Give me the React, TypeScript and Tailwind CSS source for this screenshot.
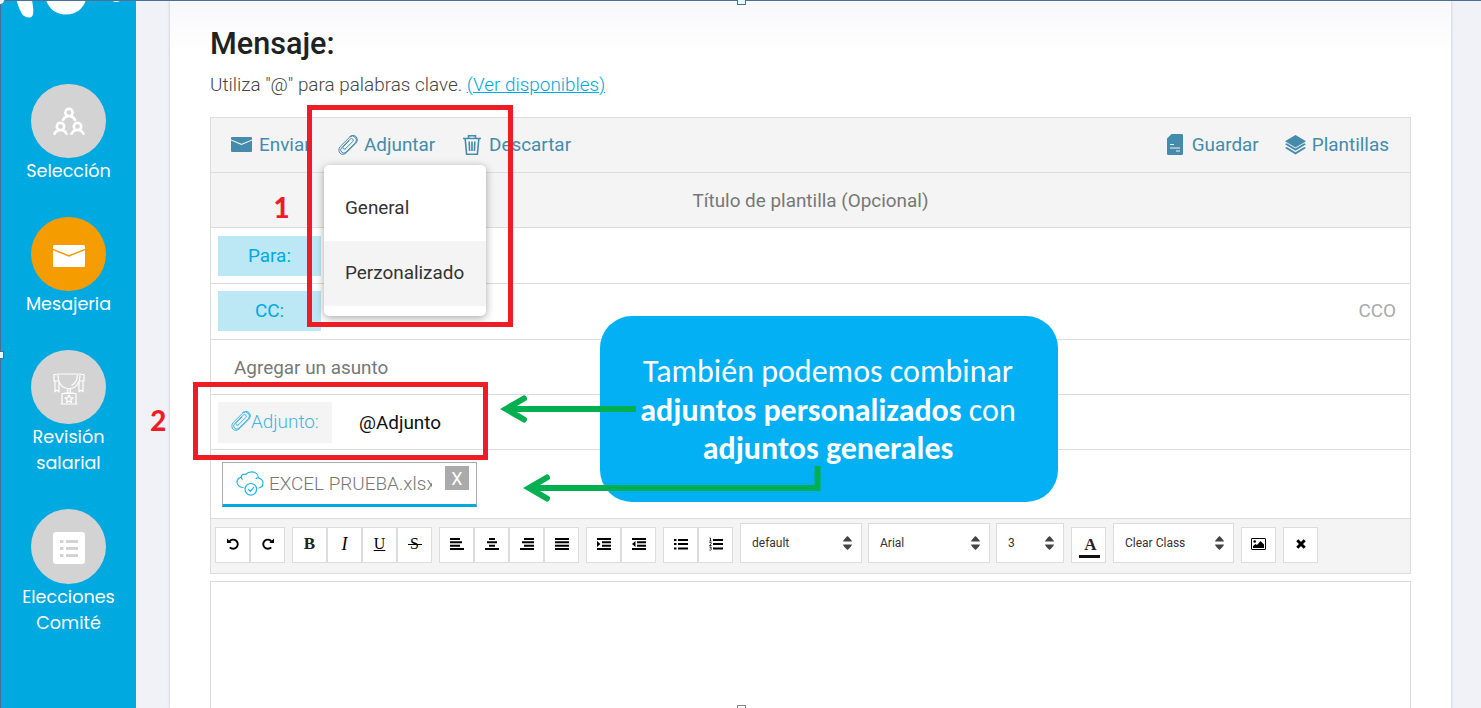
import React from 'react';

type IconProps = { className?: string };

const MailIcon = ({ className }: IconProps) => (
  <svg className={className} viewBox="0 0 32 22" fill="currentColor" preserveAspectRatio="none">
    <path d="M1.5 0h29A1.5 1.5 0 0 1 32 1.5v2.3L16 10 0 3.800V1.500A1.500 1.500 0 0 1 1.500 0Z" />
    <path d="M0 5.300 16 11.700 32 5.300V20.500a1.500 1.500 0 0 1-1.500 1.500h-29A1.500 1.500 0 0 1 0 20.500Z" />
  </svg>
);

const ClipIcon = ({ className }: IconProps) => (
  <svg className={className} viewBox="0 0 20 20" fill="none" stroke="currentColor" strokeWidth="1" strokeLinecap="round">
    <path d="M7.200 14 14.700 6.600A1.700 1.700 0 0 0 12.200 4.100L3.600 12.700A3.100 3.100 0 0 0 8 17.100L17.300 7.800A4 4 0 0 0 11.700 2.100L2.200 11.500A5 5 0 0 0 .9 15.400 3.800 3.800 0 0 0 5 19.300C6.600 19.200 7.700 18.500 8.900 17.300L18 8.200A4.900 4.900 0 0 0 18.400 1.900 4.900 4.900 0 0 0 11.700 1.500M7.200 14A1.500 1.500 0 0 1 5.200 11.800L11 6" />
  </svg>
);

const TrashIcon = ({ className }: IconProps) => (
  <svg className={className} viewBox="0 0 18 20" fill="none" stroke="currentColor" strokeWidth="1.600">
    <path d="M0 3.500h18M5.500 3.300V.8h7v2.500M2.200 4l1.400 15.200h10.800L15.800 4M6.200 6.500l.4 9.500M9 6.500V16M11.800 6.500l-.4 9.500" />
  </svg>
);

const FileIcon = ({ className }: IconProps) => (
  <svg className={className} viewBox="0 0 16 21">
    <path fill="currentColor" d="M4.500 0H14.500A1.300 1.300 0 0 1 16 1.300V19.700A1.300 1.300 0 0 1 14.700 21H1.300A1.300 1.300 0 0 1 0 19.700V4.500Z" />
    <path stroke="#f4f4f4" strokeWidth="1" d="M3 10.500h4M3 14h10M9 17h4" />
  </svg>
);

const LayersIcon = ({ className }: IconProps) => (
  <svg className={className} viewBox="0 0 21 20" fill="currentColor">
    <path d="M10.500 0 21 6.200 10.500 12.500 0 6.200Z" />
    <path d="M0 9.200 1.800 8.200 10.500 13.400 19.200 8.200 21 9.200 10.500 15.700Z" />
    <path d="M0 13 1.800 12 10.500 17.200 19.200 12 21 13 10.500 19.500Z" />
  </svg>
);

const PeopleIcon = () => (
  <svg className="h-7 w-8" viewBox="0 0 32 28" fill="none" stroke="#fff" strokeWidth="2.700" strokeLinecap="round">
    <circle cx="16" cy="5.500" r="3.700" />
    <path d="M10 12.800c1-2 2.600-3 4-3.400M22 12.800c-1-2-2.600-3-4-3.400" />
    <circle cx="7.500" cy="19.500" r="3.700" />
    <path d="M1.500 26.700c1-2 2.600-3 4-3.400M13.500 26.700c-1-2-2.600-3-4-3.400" />
    <circle cx="24.500" cy="19.500" r="3.700" />
    <path d="M18.500 26.700c1-2 2.600-3 4-3.400M30.500 26.700c-1-2-2.600-3-4-3.400" />
  </svg>
);

const TrophyIcon = () => (
  <svg className="mt-1 h-8 w-8" viewBox="0 0 32 32" fill="none" stroke="#fff" strokeWidth="1.200" strokeLinejoin="round">
    <path d="M4 1h24M5 2c0 9 4.500 13.500 11 13.500S27 11 27 2M24.500 2c-.3 5-2 8.500-6 10.500" />
    <path d="M4 1.500H1v6.500h4.500M28 1.500h3v6.500h-4.500M2 8v10.800l2-1.700 2 1.700V9M30 8v10.800l-2-1.700-2 1.700V9" />
    <path d="M14.700 15.500v4.500M17.300 15.500v4.500M11 20h10M9 20.500h14v10.500H9zM7.500 31h17" />
    <path d="m16 22 1.200 2.600 2.800.3-2.100 1.900.6 2.700-2.500-1.400-2.500 1.400.6-2.700-2.100-1.900 2.800-.3Z" />
  </svg>
);

const BallotIcon = () => (
  <svg className="mt-[3px] h-8 w-8" viewBox="0 0 32 32">
    <rect width="32" height="32" rx="3" fill="#fff" />
    <path stroke="#d3d3d3" strokeWidth="3" d="M7 9.500h3.500M13 9.500h12M7 16.500h3.500M13 16.500h12M7 23.500h3.500M13 23.500h12" />
  </svg>
);

const CloudIcon = () => (
  <svg className="-ml-px h-[25px] w-7 shrink-0" viewBox="0 0 28 25" fill="none" stroke="#1fb0e4" strokeWidth="1.200" strokeLinecap="round">
    <path d="M7 16.500C3.500 16.500 1 14 1 11.200 1 8.500 3 6.600 5.300 6.100 5.300 4 7.500 2.400 9.800 3.300 11.500 1.300 13.500.8 15.500.8 19.500.8 22.300 3.500 22.500 7 25.500 7.700 27 10 27 12.300 27 14.700 25.300 16.500 23 17M5.300 6.100c0 .9.300 1.500.9 2M22.500 7c-.8-.1-1.500 0-2.300.4" />
    <circle cx="14.800" cy="18.300" r="5.800" />
    <path d="m12.300 18.300 2 2 3.400-4" />
  </svg>
);

const Lines = ({ d, extra }: { d: string; extra?: React.ReactNode }) => (
  <svg className="-mt-px h-3 w-[14px]" viewBox="0 0 14 12" fill="#000" stroke="none">
    <path d={d} stroke="#000" strokeWidth="2" fill="none" />
    {extra}
  </svg>
);

const UndoIcon = ({ flip }: { flip?: boolean }) => (
  <svg className={flip ? '-mt-px h-3 w-3 -scale-x-100' : '-mt-px h-3 w-3'} viewBox="0 0 12 12" fill="none">
    <path d="M2.600 3.300A4.600 4.600 0 1 1 2.800 9.300" stroke="#000" strokeWidth="1.900" />
    <path d="M0 .5V5h4.600Z" fill="#000" />
  </svg>
);

const Tool = ({ children }: { children: React.ReactNode }) => (
  <button className="flex h-9 w-[35px] items-center justify-center border border-[#dcdcdc] bg-white pb-[2px] text-black">{children}</button>
);

const Group = ({ children }: { children: React.ReactNode }) => <div className="mr-[7px] flex">{children}</div>;

const Select = ({ label, className }: { label: string; className: string }) => (
  <div className={`flex h-10 items-center justify-between border border-[#dcdcdc] bg-white pr-[9px] pl-[11px] text-[12px] text-[#333] ${className}`}>
    <span>{label}</span>
    <svg className="h-[14px] w-[9px]" viewBox="0 0 9 14" fill="#444">
      <path d="M0 5.500Q.3 4 4.500 0 8.700 4 9 5.500ZM0 8.500Q.3 10 4.500 14 8.700 10 9 8.500Z" />
    </svg>
  </div>
);

const NavItem = ({ icon, lines, active, tall }: { icon: React.ReactNode; lines: string[]; active?: boolean; tall?: boolean }) => (
  <div className="mb-[33px] flex flex-col items-center">
    <div className={`flex w-[75px] items-center justify-center rounded-full ${tall ? 'h-[75px]' : 'h-[74px]'} ${active ? 'bg-[#f59c00]' : 'bg-[#d3d3d3]'}`}>{icon}</div>
    {lines.map((l) => (
      <span key={l} className="h-[26px] text-[17.600px] leading-[26px] text-white">{l}</span>
    ))}
  </div>
);

export default function App() {
  return (
    <div className="relative flex h-[708px] w-[1481px] overflow-hidden bg-[#f0f2f8] font-[Roboto,sans-serif]">
      <aside className="flex w-[136px] shrink-0 flex-col border-l border-[#4b7095] bg-[#00a9e0] font-[Poppins,Inter,sans-serif]">
        <svg className="mb-[66px] h-[18px] w-[135px]" viewBox="1 0 135 18" fill="#fff">
          <path d="M16.500 0H32c1 6 2 12 .8 15-1.500 4-8 3-10.800-1-2.500-4-4-9-5.500-14ZM46 0h40c-3 9-10 14.500-20 14.500S49 9 46 0ZM111 0h10c-2 2.500-7 2.500-10 0Z" />
        </svg>
        <NavItem icon={<PeopleIcon />} lines={['Selección']} />
        <NavItem icon={<MailIcon className="mt-1 h-[22px] w-8 text-white" />} lines={['Mesajeria']} active />
        <NavItem icon={<TrophyIcon />} lines={['Revisión', 'salarial']} />
        <NavItem icon={<BallotIcon />} lines={['Elecciones', 'Comité']} tall />
      </aside>

      <main className="ml-[34px] flex h-[708px] w-[1281px] flex-col bg-gradient-to-b from-[#f8f8fb] to-white to-[56px] px-10 shadow-[0_0_3px_rgba(0,0,0,0.2)]">
        <h1 className="mt-[26px] h-9 text-[30.600px] leading-9 font-medium text-[#212121]">Mensaje:</h1>
        <p className="mt-[11px] h-6 text-[18.900px] leading-6 font-light text-[#444]">
          Utiliza "@" para palabras clave. <a className="text-[#00a9e0] underline">(Ver disponibles)</a>
        </p>

        <section className="mt-5 flex h-[457px] w-[1201px] shrink-0 flex-col border border-[#dcdcdc] bg-white text-[18.900px]">
          <div className="flex h-[55px] items-center border-b border-[#dcdcdc] bg-[#f4f4f4] pr-[21px] pb-px pl-5 text-[#448bac]">
            <MailIcon className="mr-[7px] h-[15px] w-[21px]" />
            <span className="w-[79px] pt-[2px]">Enviar</span>
            <ClipIcon className="mr-[6px] h-5 w-5" />
            <span className="w-[99px] pt-[2px]">Adjuntar</span>
            <TrashIcon className="mr-2 h-5 w-[18px]" />
            <span className="flex-1 pt-[2px]">Descartar</span>
            <FileIcon className="mr-[9px] h-[21px] w-4" />
            <span className="mr-[26px] pt-[2px]">Guardar</span>
            <LayersIcon className="mr-[6px] h-5 w-[21px]" />
            <span className="pt-[2px]">Plantillas</span>
          </div>
          <div className="flex h-[55px] items-center justify-center border-b border-[#dcdcdc] bg-[#f4f4f4] pt-[2px] text-[#777]">Título de plantilla (Opcional)</div>
          <div className="h-14 border-b border-[#dcdcdc] pt-2 pl-[7px]">
            <div className="h-10 w-[103px] bg-[#bce8f6] text-center leading-10 text-[#00a9e0]">Para:</div>
          </div>
          <div className="flex h-14 justify-between border-b border-[#dcdcdc] pt-[7px] pr-[14px] pl-[7px]">
            <div className="h-10 w-[103px] bg-[#bce8f6] text-center leading-[39px] text-[#00a9e0]">CC:</div>
            <span className="leading-[39px] text-[#aaa]">CCO</span>
          </div>
          <div className="flex h-[55px] items-center border-b border-[#dcdcdc] pt-[2px] pl-[23px] text-[#777]">Agregar un asunto</div>
          <div className="flex h-[55px] border-b border-[#dcdcdc] pt-[7px] pl-[7px]">
            <div className="flex h-[41px] w-[114px] items-center bg-[#f4f4f4] pb-px pl-[13px] font-light text-[#3eb5e4]">
              <ClipIcon className="-mt-[3px] h-5 w-5" />
              <span>Adjunto:</span>
            </div>
            <span className="ml-[27px] leading-[42px] text-[#111]">@Adjunto</span>
          </div>
          <div className="h-[69px] border-b border-[#dcdcdc] pt-3 pl-[11px]">
            <div className="flex h-[45px] w-[255px] border border-b-[3px] border-[#aaa] border-b-[#00a9e0] pl-[14px]">
              <div className="flex h-[41px] items-center">
                <CloudIcon />
                <span className="ml-[5px] w-[163px] overflow-hidden pt-px font-light whitespace-nowrap text-[#777]">EXCEL PRUEBA.xlsx</span>
              </div>
              <span className="mt-[3px] ml-[13px] flex h-6 w-6 items-center justify-center bg-[#aaa] text-[18px] text-white">X</span>
            </div>
          </div>
          <div className="flex h-[54px] items-end bg-[#f4f4f4] pb-[10px] pl-1">
            <Group>
              <Tool><UndoIcon /></Tool>
              <Tool><UndoIcon flip /></Tool>
            </Group>
            <Group>
              <Tool><b className="font-['Liberation_Serif',serif] text-[17px] text-[#222]">B</b></Tool>
              <Tool><i className="font-['Liberation_Serif',serif] text-[18px]">I</i></Tool>
              <Tool><u className="font-['Liberation_Serif',serif] text-[16px]">U</u></Tool>
              <Tool>
                <span className="flex w-[14px] justify-center bg-[linear-gradient(#000,#000)] bg-[length:14px_1px] bg-[position:0_12px] bg-no-repeat font-['Liberation_Serif',serif] text-[16px]">S</span>
              </Tool>
            </Group>
            <Group>
              <Tool><Lines d="M0 1h10M0 4.300h12M0 7.700h10M0 11h14" /></Tool>
              <Tool><Lines d="M4 1h6M2 4.300h10M4 7.700h6M0 11h14" /></Tool>
              <Tool><Lines d="M4 1h10M2 4.300h12M4 7.700h10M0 11h14" /></Tool>
              <Tool><Lines d="M0 1h14M0 4.300h14M0 7.700h14M0 11h14" /></Tool>
            </Group>
            <Group>
              <Tool><Lines d="M0 1h14M5 4.300h9M5 7.700h9M0 11h14" extra={<path d="M0 3v6l3.500-3Z" />} /></Tool>
              <Tool><Lines d="M0 1h14M5 4.300h9M5 7.700h9M0 11h14" extra={<path d="M3.500 3v6L0 6Z" />} /></Tool>
            </Group>
            <Group>
              <Tool><Lines d="M4 2h10M4 6h10M4 10.500h10M0 2h2.500M0 6h2.500M0 10.500h2.500" /></Tool>
              <Tool>
                <svg className="-mt-px h-[14px] w-[14px]" viewBox="0 0 14 14" fill="none" stroke="#000">
                  <path strokeWidth="2" d="M4 3h10M4 7h10M4 11.500h10" />
                  <path strokeWidth=".8" d="M.5 1h1v3M.3 4h2.200M.4 5.600h1.800v1.100L.5 8.500h2M.4 10h2l-1 1.200q1.300 0 1 1.200-.5 1.100-2 .6" />
                </svg>
              </Tool>
            </Group>
            <Select label="default" className="mr-[6px] w-[122px]" />
            <Select label="Arial" className="mr-[6px] w-[122px]" />
            <Select label="3" className="mr-[7px] w-[68px]" />
            <Group>
              <Tool>
                <span className="mt-[3px] ml-[2px] flex h-[25px] w-[21px] flex-col border-b-[3px] border-[#111] pl-[2px] font-['Liberation_Serif',serif] text-[17px] leading-[24px] font-bold text-[#222]">A</span>
              </Tool>
            </Group>
            <Select label="Clear Class" className="mr-[7px] w-[121px]" />
            <Group>
              <Tool>
                <svg className="h-3 w-[15px]" viewBox="0 0 15 12">
                  <rect x=".5" y=".5" width="14" height="11" rx=".5" fill="none" stroke="#000" />
                  <path d="M2 10V8l2.500-2L6 7l3.500-4L13 6.500V10Z" />
                  <circle cx="3.700" cy="3.500" r="1.300" />
                </svg>
              </Tool>
            </Group>
            <Tool>
              <svg className="h-[10px] w-[10px]" viewBox="0 0 10 10"><path d="m1.300 1.300 7.400 7.400M8.700 1.300 1.300 8.700" stroke="#000" strokeWidth="3" /></svg>
            </Tool>
          </div>
        </section>
        <section className="mt-[7px] w-[1201px] flex-1 border border-b-0 border-[#dcdcdc] bg-white" />
      </main>

      <div className="absolute top-[165px] left-[324px] flex h-[151px] w-[162px] flex-col rounded-[5px] bg-white pt-[11px] text-[18.900px] text-[#333] shadow-[0_2px_8px_rgba(0,0,0,0.35)]">
        <span className="h-[65px] pl-[21px] leading-[63px]">General</span>
        <span className="h-[65px] bg-[#f4f4f4] pl-[21px] leading-[63px]">Perzonalizado</span>
      </div>

      <div className="absolute top-[105px] left-[307px] h-[222px] w-[206px] border-5 border-[#ee1c24]" />
      <div className="absolute top-[382px] left-[193px] h-[78px] w-[295px] border-5 border-[#ee1c24]" />
      <span className="absolute top-[188px] left-[273px] font-[Carlito,'Open_Sans',sans-serif] text-[32px] leading-10 font-bold text-[#ee1c24]">1</span>
      <span className="absolute top-[401px] left-[150px] font-[Carlito,'Open_Sans',sans-serif] text-[32px] leading-10 font-bold text-[#ee1c24]">2</span>

      <div className="absolute top-[316px] left-[600px] flex h-[186px] w-[458px] flex-col items-center rounded-[32px] bg-[#03b0f3] pt-[37px] pr-[2px] font-[Carlito,'Open_Sans',sans-serif] text-[32px] leading-[38.500px] whitespace-nowrap text-white">
        <span>También podemos combinar</span>
        <span><b>adjuntos personalizados</b> con</span>
        <b>adjuntos generales</b>
      </div>
      <svg className="absolute top-0 left-0 h-[708px] w-[1481px]" viewBox="0 0 1481 708" fill="none" stroke="#00b050" strokeWidth="6">
        <path d="M636 409H508" />
        <path d="M524 398.500 506 409 524 419.500" strokeLinecap="round" />
        <path d="M817.500 466V488H530" />
        <path d="M547 477.500 529 488 547 498.500" strokeLinecap="round" />
      </svg>

      <div className="absolute top-0 left-0 h-px w-[1481px] bg-[#4b7095]" />
      <div className="absolute -top-1 left-[737px] h-[9px] w-[9px] border border-[#4b7095] bg-[#e4fbff]" />
      <div className="absolute top-[705px] left-[737px] h-[9px] w-[9px] border border-[#888] bg-white" />
      <div className="absolute top-[351px] -left-1 h-2 w-2 border border-[#4b7095] bg-[#e4fbff]" />
      <div className="absolute -top-1 -left-1 h-[9px] w-[9px] rounded-full border border-[#4b7095] bg-[#e4fbff]" />
    </div>
  );
}
